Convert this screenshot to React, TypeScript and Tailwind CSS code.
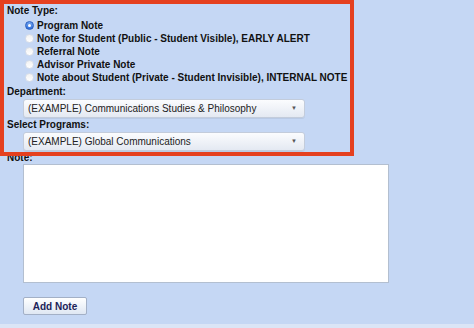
import React from 'react';

const noteTypes = [
  'Program Note',
  'Note for Student (Public - Student Visible), EARLY ALERT',
  'Referral Note',
  'Advisor Private Note',
  'Note about Student (Private - Student Invisible), INTERNAL NOTE',
];

const Radio = ({ checked }: { checked: boolean }) =>
  checked ? (
    <span className="w-[9px] h-[9px] rounded-full bg-gradient-to-b from-[#6fa3f0] to-[#2f6fdc] border border-[#2a5fbf] flex items-center justify-center shrink-0">
      <span className="w-[3px] h-[3px] rounded-full bg-white" />
    </span>
  ) : (
    <span className="w-[9px] h-[9px] rounded-full bg-gradient-to-b from-[#f2f2f2] to-white border border-[#d8dee8] shrink-0" />
  );

const Select = ({ value }: { value: string }) => (
  <div className="ml-[16px] w-[282px] h-[19px] rounded-[3px] border border-[#c3ccdb] bg-gradient-to-b from-[#fbfcfe] to-[#e4e9f2] flex items-center justify-between pl-[4px] pr-[7px] shadow-[0_1px_0_rgba(0,0,0,0.06)]">
    <span className="text-[10px] text-[#222]">{value}</span>
    <span className="text-[6px] text-[#555]">▼</span>
  </div>
);

const App = () => {
  return (
    <div className="relative w-[474px] h-[328px] overflow-hidden bg-[#c5d7f4] font-['Liberation_Sans',Arial,sans-serif]">
      <div className="pl-[7px] pt-[4px]">
        <div className="text-[10px] font-bold text-[#111] leading-[13px]">Note Type:</div>
        <div className="flex flex-col mt-[2px]">
          {noteTypes.map((t, i) => (
            <label key={i} className="flex items-center gap-[3px] pl-[18px] h-[13px]">
              <Radio checked={i === 0} />
              <span className="text-[10px] font-bold text-[#111] leading-[13px]">{t}</span>
            </label>
          ))}
        </div>
        <div className="text-[10px] font-bold text-[#111] leading-[13px] mt-[1px]">Department:</div>
        <div className="mt-[1px]">
          <Select value="(EXAMPLE) Communications Studies & Philosophy" />
        </div>
        <div className="text-[10px] font-bold text-[#111] leading-[13px]">Select Programs:</div>
        <div className="mt-[1px]">
          <Select value="(EXAMPLE) Global Communications" />
        </div>
        <div className="text-[10px] font-bold text-[#111] leading-[13px]">Note:</div>
        <div className="ml-[16px] w-[366px] h-[119px] bg-white border border-[#b3bfd0]" />
        <button className="ml-[16px] mt-[14px] w-[64px] h-[18px] rounded-[2px] border border-[#a3b0c6] bg-gradient-to-b from-white to-[#dfe7f3] text-[10px] font-bold text-[#1c2358]">
          Add Note
        </button>
      </div>
      <div className="absolute left-0 right-0 bottom-0 h-[4px] bg-[#dbe5f6]" />
      <div className="absolute left-0 top-0 w-[354px] h-[156px] border-[4px] border-[#e5401f] pointer-events-none" />
    </div>
  );
};

export default App;
